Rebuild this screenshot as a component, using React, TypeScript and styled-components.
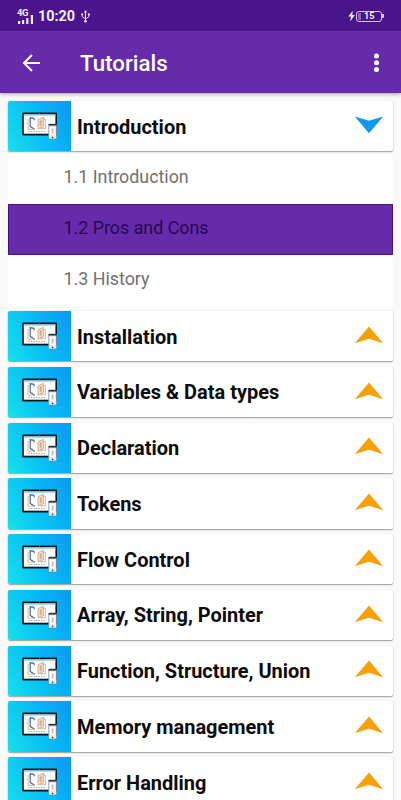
import React from "react";
import styled, { createGlobalStyle } from "styled-components";

const GlobalStyle = createGlobalStyle`
  * { box-sizing: border-box; }
  html, body { margin: 0; padding: 0; }
  body { font-family: Roboto, "Liberation Sans", sans-serif; background: #fafafa; overflow: hidden; }
  svg { display: block; flex: none; }
`;

const Screen = styled.div`
  width: 401px;
  height: 800px;
  overflow: hidden;
  display: flex;
  flex-direction: column;
  background: #fafafa;
`;

const StatusBar = styled.header`
  height: 31px;
  flex: none;
  display: flex;
  align-items: center;
  justify-content: space-between;
  padding: 1px 17px 0 17px;
  background: #4a148c;
  color: #f6eefb;
`;

const StatusGroup = styled.div`
  display: flex;
  align-items: center;
`;

const Clock = styled.span`
  font-size: 14.4px;
  line-height: 16px;
  font-weight: 700;
  width: 37px;
  margin: 1px 6px 0 4px;
  white-space: nowrap;
`;

const Signal = styled.div`
  width: 17px;
  display: flex;
  flex-direction: column;
`;

const NetworkLabel = styled.span`
  font-size: 9.5px;
  line-height: 9px;
  height: 7px;
  font-weight: 700;
  letter-spacing: -0.4px;
`;

const AppBar = styled.div`
  height: 62px;
  flex: none;
  display: flex;
  align-items: center;
  padding: 1px 20px 0 22px;
  background: #652ba8;
  color: #fff;
  box-shadow: 0 1px 4px rgba(60, 30, 90, 0.45);
  z-index: 1;
`;

const Title = styled.h1`
  flex: 1;
  margin: 0 0 0 39px;
  font-size: 22.3px;
  font-weight: 500;
  line-height: 28px;
`;

const List = styled.main`
  padding: 8px 8px 0;
`;

const Card = styled.section`
  height: 50.25px;
  margin-bottom: 5.5px;
  display: flex;
  align-items: center;
  background: #fff;
  border-radius: 2px;
  overflow: hidden;
  padding-right: 9px;
  box-shadow: 0 1px 1.5px rgba(0, 0, 0, 0.38), 0 0 1px rgba(0, 0, 0, 0.12);
`;

const Thumb = styled.div`
  width: 63px;
  height: 100%;
  flex: none;
  padding: 11px 0 0 14px;
  background: linear-gradient(65deg, #16e0ec 0%, #08bdf4 50%, #0899f3 100%);
`;

const CardTitle = styled.h2`
  flex: 1;
  margin: 1px 0 0 6px;
  font-size: 19.97px;
  font-weight: 700;
  line-height: 26px;
  color: #0c0c0c;
  white-space: nowrap;
`;

const SubList = styled.ul`
  list-style: none;
  margin: -4.5px 0 4px;
  padding: 0 0 1px;
  background: linear-gradient(transparent 2px, #fff 2px);
`;

const SubItem = styled.li<{ $selected?: boolean }>`
  height: 51.25px;
  display: flex;
  align-items: center;
  padding: 0 0 3px 55.5px;
  font-size: 17.85px;
  border-radius: 1px;
  color: ${(p) => (p.$selected ? "#2b0558" : "#717171")};
  background: ${(p) => (p.$selected ? "#652ba8" : "transparent")};
  box-shadow: ${(p) => (p.$selected ? "inset 0 0 0 1px #43108a" : "none")};
`;

const SignalIcon = () => (
  <Signal>
    <NetworkLabel>4G</NetworkLabel>
    <svg width="17" height="9" fill="currentColor">
      <rect x="1" y="6" width="2.2" height="3" />
      <rect x="5" y="5" width="2.2" height="4" />
      <rect x="9.2" y="3" width="2.2" height="6" />
      <rect x="13.8" y="0" width="2.2" height="9" />
    </svg>
  </Signal>
);

const UsbIcon = () => (
  <svg width="9" height="13" viewBox="0 0 9 13" fill="none" stroke="currentColor" strokeWidth="0.9">
    <path d="M4.5 2v9M1.2 4.5v2.2L4.5 9l3.3-2.3V4.5" />
    <path d="M4.5 0L6.2 2.6H2.8z" fill="currentColor" stroke="none" />
    <circle cx="4.5" cy="11.2" r="1.3" fill="currentColor" stroke="none" />
    <circle cx="1.2" cy="4.3" r="1" fill="currentColor" stroke="none" />
    <rect x="6.9" y="3.4" width="1.9" height="1.9" fill="currentColor" stroke="none" />
  </svg>
);

const BatteryText = styled.span`
  width: 26px;
  height: 11px;
  border: 1px solid #d9c8ea;
  border-radius: 3px;
  display: flex;
  align-items: center;
  padding-left: 1px;
  font-size: 9px;
  line-height: 9px;
  font-weight: 700;
  letter-spacing: 0.2px;
  gap: 3px;
`;

const BatteryLevel = styled.i`
  width: 3px;
  height: 7px;
  background: #8d62bb;
`;

const BatteryTip = styled.i`
  width: 2px;
  height: 4px;
  background: #d9c8ea;
  border-radius: 0 1px 1px 0;
`;

const Battery = () => (
  <StatusGroup>
    <svg width="8" height="12" viewBox="0 0 8 12" fill="currentColor">
      <path d="M4.8 0.7L0.2 6.6H3L2.2 11.4L6.8 5H4.2z" />
    </svg>
    <BatteryText>
      <BatteryLevel />
      15
    </BatteryText>
    <BatteryTip />
  </StatusGroup>
);

const BackIcon = () => (
  <svg width="19" height="18" viewBox="0 0 19 18" fill="none" stroke="currentColor" strokeWidth="2">
    <path d="M18 9H2M10 1L2 9l8 8" />
  </svg>
);

const MenuIcon = () => (
  <svg width="9" height="20" viewBox="0 0 9 20" fill="currentColor">
    <circle cx="4.5" cy="3" r="2.5" />
    <circle cx="4.5" cy="9.8" r="2.5" />
    <circle cx="4.5" cy="16.6" r="2.5" />
  </svg>
);

const DeviceIcon = () => (
  <svg width="36" height="28" viewBox="0 0 36 28">
    <rect x="0.2" y="0.6" width="34.8" height="22.8" rx="1" fill="#12171d" />
    <rect x="1.8" y="2.5" width="31.6" height="19.2" fill="#fcfdfd" />
    <rect x="1.8" y="2.5" width="31.6" height="1.6" fill="#a5dff0" />
    <circle cx="17.6" cy="1.5" r="0.4" fill="#9ab" />
    <g fill="none">
      <path d="M12.2 6.4L8.2 5.6V14.4L12.6 17.2M12.2 6.4V8.2" stroke="#3f5d86" strokeWidth="1.1" />
      <path d="M7 7.5H6v9.6h6.5" stroke="#c9ab90" strokeWidth="0.8" />
      <path d="M16 7.6l5.5-2.2v9.4L16 17z" stroke="#d6a87f" strokeWidth="0.9" fill="#f3dcc6" />
      <path d="M22 7.4h1.4v9.4h-5.6" stroke="#c9a686" strokeWidth="0.8" />
      <path d="M17.6 10l2.4-0.9M17.6 12.5l2.4-0.8M18.8 8.4v6" stroke="#c1946e" strokeWidth="0.7" />
      <path d="M6.5 19.5h17" stroke="#8fa3b3" strokeWidth="0.9" strokeDasharray="1.4 1.1" />
    </g>
    <rect x="26.6" y="12" width="8" height="15" rx="0.9" fill="#eef3f8" stroke="#62758d" strokeWidth="0.5" />
    <rect x="26.6" y="12" width="8" height="1.6" fill="#283342" />
    <rect x="27.7" y="14.7" width="5.8" height="8.6" fill="#fff" stroke="#c8d5e2" strokeWidth="0.4" />
    <path d="M30.6 16.5v4M29.4 18.2h2.5M29.4 20.8h2.6" stroke="#a39ba5" strokeWidth="0.7" />
    <circle cx="30.6" cy="25.4" r="0.9" fill="#30435c" />
  </svg>
);

const ArrowSvg = styled.svg<{ $open?: boolean }>`
  margin-bottom: ${(p) => (p.$open ? "2px" : "2.5px")};
`;

const Arrow = ({ open }: { open?: boolean }) => (
  <ArrowSvg $open={open} width="30" height="18" viewBox="0 0 30 18">
    {open ? (
      <path d="M0.8 0.5L15 4.8L29.2 0.5L15 17.2z" fill="#0c99ec" />
    ) : (
      <path d="M0.8 17.2L15 0.5L29.2 17.2L15 12.8z" fill="#f7a009" />
    )}
  </ArrowSvg>
);

const Topic = ({ title, open }: { title: string; open?: boolean }) => (
  <Card>
    <Thumb>
      <DeviceIcon />
    </Thumb>
    <CardTitle>{title}</CardTitle>
    <Arrow open={open} />
  </Card>
);

const topics = [
  "Installation",
  "Variables & Data types",
  "Declaration",
  "Tokens",
  "Flow Control",
  "Array, String, Pointer",
  "Function, Structure, Union",
  "Memory management",
  "Error Handling",
];

export default function App() {
  return (
    <Screen>
      <GlobalStyle />
      <StatusBar>
        <StatusGroup>
          <SignalIcon />
          <Clock>10:20</Clock>
          <UsbIcon />
        </StatusGroup>
        <Battery />
      </StatusBar>
      <AppBar>
        <BackIcon />
        <Title>Tutorials</Title>
        <MenuIcon />
      </AppBar>
      <List>
        <Topic title="Introduction" open />
        <SubList>
          <SubItem>1.1 Introduction</SubItem>
          <SubItem $selected>1.2 Pros and Cons</SubItem>
          <SubItem>1.3 History</SubItem>
        </SubList>
        {topics.map((t) => (
          <Topic key={t} title={t} />
        ))}
      </List>
    </Screen>
  );
}
